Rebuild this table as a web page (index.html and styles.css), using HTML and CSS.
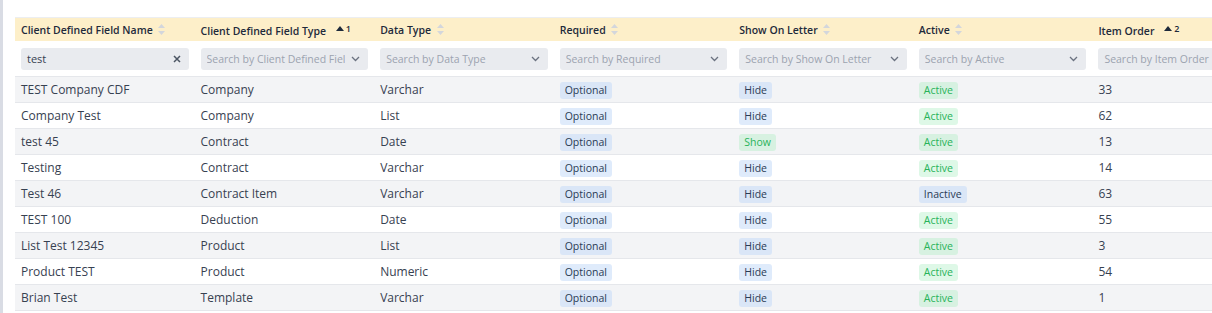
FILE: index.html
```html
<!DOCTYPE html>
<html lang="en">
<head>
    <meta charset="UTF-8">
    <title>Client Defined Fields</title>
    <link rel="stylesheet" href="styles.css">
</head>
<body>
    <div class="page">
        <div class="side-rail"></div>
        <div class="content">
            <div class="grid-wrap">
                <table class="grid">
                    <thead>
                        <tr class="head-row">
                            <th>Client Defined Field Name <span class="sort"><svg width="7" height="11" viewBox="0 0 7 11"><path d="M3.5 0 7 4H0z M3.5 11 7 7H0z"/></svg></span></th>
                            <th>Client Defined Field Type <span class="sorted"><svg width="8" height="5" viewBox="0 0 8 5"><path d="M4 0 8 5H0z"/></svg><sup>1</sup></span></th>
                            <th>Data Type <span class="sort"><svg width="7" height="11" viewBox="0 0 7 11"><path d="M3.5 0 7 4H0z M3.5 11 7 7H0z"/></svg></span></th>
                            <th>Required <span class="sort"><svg width="7" height="11" viewBox="0 0 7 11"><path d="M3.5 0 7 4H0z M3.5 11 7 7H0z"/></svg></span></th>
                            <th>Show On Letter <span class="sort"><svg width="7" height="11" viewBox="0 0 7 11"><path d="M3.5 0 7 4H0z M3.5 11 7 7H0z"/></svg></span></th>
                            <th>Active <span class="sort"><svg width="7" height="11" viewBox="0 0 7 11"><path d="M3.5 0 7 4H0z M3.5 11 7 7H0z"/></svg></span></th>
                            <th>Item Order <span class="sorted"><svg width="8" height="5" viewBox="0 0 8 5"><path d="M4 0 8 5H0z"/></svg><sup>2</sup></span></th>
                        </tr>
                        <tr class="filter-row">
                            <td><div class="filter"><span class="value">test</span><svg class="clear" width="8" height="8" viewBox="0 0 8 8"><path d="M1 1 7 7M7 1 1 7"/></svg></div></td>
                            <td><div class="filter"><span class="ph">Search by Client Defined Field Type</span><svg class="chev" width="9" height="6" viewBox="0 0 9 6"><path d="M1 1 4.5 4.5 8 1"/></svg></div></td>
                            <td><div class="filter"><span class="ph">Search by Data Type</span><svg class="chev" width="9" height="6" viewBox="0 0 9 6"><path d="M1 1 4.5 4.5 8 1"/></svg></div></td>
                            <td><div class="filter"><span class="ph">Search by Required</span><svg class="chev" width="9" height="6" viewBox="0 0 9 6"><path d="M1 1 4.5 4.5 8 1"/></svg></div></td>
                            <td><div class="filter"><span class="ph">Search by Show On Letter</span><svg class="chev" width="9" height="6" viewBox="0 0 9 6"><path d="M1 1 4.5 4.5 8 1"/></svg></div></td>
                            <td><div class="filter"><span class="ph">Search by Active</span><svg class="chev" width="9" height="6" viewBox="0 0 9 6"><path d="M1 1 4.5 4.5 8 1"/></svg></div></td>
                            <td><div class="filter"><span class="ph">Search by Item Order</span></div></td>
                        </tr>
                    </thead>
                    <tbody>
                        <tr><td>TEST Company CDF</td><td>Company</td><td>Varchar</td><td><span class="tag blue">Optional</span></td><td><span class="tag blue">Hide</span></td><td><span class="tag green">Active</span></td><td>33</td></tr>
                        <tr><td>Company Test</td><td>Company</td><td>List</td><td><span class="tag blue">Optional</span></td><td><span class="tag blue">Hide</span></td><td><span class="tag green">Active</span></td><td>62</td></tr>
                        <tr><td>test 45</td><td>Contract</td><td>Date</td><td><span class="tag blue">Optional</span></td><td><span class="tag green">Show</span></td><td><span class="tag green">Active</span></td><td>13</td></tr>
                        <tr><td>Testing</td><td>Contract</td><td>Varchar</td><td><span class="tag blue">Optional</span></td><td><span class="tag blue">Hide</span></td><td><span class="tag green">Active</span></td><td>14</td></tr>
                        <tr><td>Test 46</td><td>Contract Item</td><td>Varchar</td><td><span class="tag blue">Optional</span></td><td><span class="tag blue">Hide</span></td><td><span class="tag blue">Inactive</span></td><td>63</td></tr>
                        <tr><td>TEST 100</td><td>Deduction</td><td>Date</td><td><span class="tag blue">Optional</span></td><td><span class="tag blue">Hide</span></td><td><span class="tag green">Active</span></td><td>55</td></tr>
                        <tr><td>List Test 12345</td><td>Product</td><td>List</td><td><span class="tag blue">Optional</span></td><td><span class="tag blue">Hide</span></td><td><span class="tag green">Active</span></td><td>3</td></tr>
                        <tr><td>Product TEST</td><td>Product</td><td>Numeric</td><td><span class="tag blue">Optional</span></td><td><span class="tag blue">Hide</span></td><td><span class="tag green">Active</span></td><td>54</td></tr>
                        <tr><td>Brian Test</td><td>Template</td><td>Varchar</td><td><span class="tag blue">Optional</span></td><td><span class="tag blue">Hide</span></td><td><span class="tag green">Active</span></td><td>1</td></tr>
                    </tbody>
                </table>
            </div>
        </div>
    </div>
</body>
</html>
```

FILE: styles.css
```css
html, body {
    margin: 0;
    height: 100%;
    font-family: "Open Sans", "Noto Sans", sans-serif;
    color: #374151;
    background: #fff;
}

.page {
    display: flex;
    height: 100vh;
    overflow: hidden;
}

.side-rail {
    width: 3px;
    flex: none;
    background: #d9dce4; /* thin grey rail on the far left */
}

.content {
    flex: 1;
    min-width: 0;
    padding: 17px 0 0 12px;
    overflow: hidden;
}

.grid-wrap {
    width: 1260px;
}

.grid {
    width: 1257px;
    table-layout: fixed;
    border-collapse: collapse;
    border-top: 1px solid #eceef1;
}

.grid th, .grid td {
    padding: 0 6px;
    text-align: left;
    white-space: nowrap;
    overflow: hidden;
}

/* header */
.head-row th {
    height: 23px;
    background: #fdefc9;
    font-size: 10.5px;
    font-weight: 600;
    color: #1e2a3b;
}

.sort {
    display: inline-block;
    margin-left: 3px;
    vertical-align: -1px;
}

.sort svg {
    fill: #d3d6dc;
    display: block;
}

.sorted {
    display: inline-block;
    margin-left: 7px;
    vertical-align: 3px;
}

.sorted svg {
    fill: #1e2a3b;
    vertical-align: 1px;
}

.sorted sup {
    font-size: 9px;
    font-weight: 600;
    margin-left: 2px;
    vertical-align: 0;
}

/* filter row */
.filter-row td {
    height: 35px;
    background: #fff;
    border-bottom: 1px solid #e5e7eb;
}

.filter {
    display: flex;
    align-items: center;
    height: 22px;
    padding: 0 8px 0 6px;
    background: #e9ebef;
    border-radius: 3px;
    font-size: 10.5px;
    overflow: hidden;
}

.filter .ph {
    flex: 1;
    min-width: 0;
    color: #9ca3af;
    overflow: hidden;
    text-overflow: clip;
}

.filter .value {
    flex: 1;
    font-size: 11px;
    color: #374151;
}

.chev {
    flex: none;
    margin-left: 6px;
    fill: none;
    stroke: #6b7280;
    stroke-width: 1.3;
}

.clear {
    flex: none;
    fill: none;
    stroke: #4b5563;
    stroke-width: 1.5;
}

/* body rows */
.grid tbody td {
    height: 25px;
    font-size: 12px;
    color: #374151;
    border-bottom: 1px solid #e5e7eb;
}

.grid tbody tr:nth-child(odd) td {
    background: #f3f4f6;
}

.tag {
    display: inline-block;
    padding: 0 5px;
    line-height: 17px;
    border-radius: 3px;
    font-size: 10.5px;
}

.tag.blue {
    background: rgba(196, 218, 248, 0.55);
    color: #2a3b55;
}

.tag.green {
    background: rgba(172, 238, 196, 0.4);
    color: #27b35a;
}
```
